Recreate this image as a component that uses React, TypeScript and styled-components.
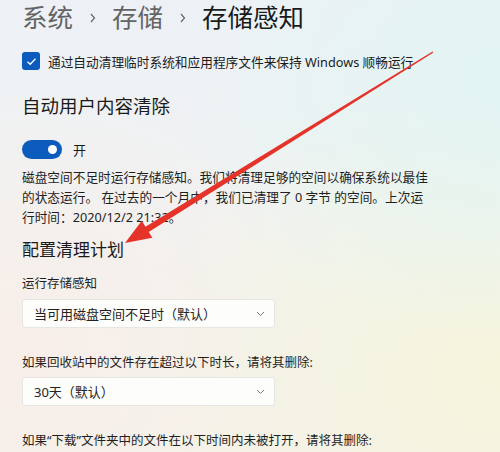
import React from 'react';
import styled, { createGlobalStyle } from 'styled-components';

const GlobalStyle = createGlobalStyle`
  html, body {
    margin: 0;
    padding: 0;
  }
  body {
    font-family: "Noto Sans", "Noto Sans CJK SC", sans-serif;
    color: #1b1b1b;
  }
`;

const Page = styled.main`
  position: relative;
  width: 500px;
  height: 452px;
  overflow: hidden;
  box-sizing: border-box;
  padding-left: 22px;
  background:
    radial-gradient(ellipse 320px 260px at 100% 18%, #e2f5f3 0%, rgba(226, 245, 243, 0) 100%),
    radial-gradient(ellipse 360px 300px at 100% 82%, #f5f4dc 0%, rgba(245, 244, 220, 0) 100%),
    radial-gradient(ellipse 340px 260px at 0% 78%, #f8eee9 0%, rgba(248, 238, 233, 0) 100%),
    linear-gradient(180deg, #edf1f6 0%, #f1f2f0 60%, #f4f2ea 100%);
`;

const Breadcrumb = styled.nav`
  display: flex;
  align-items: center;
  height: 35px;
  font-size: 25.5px;
  line-height: 35px;
`;

const Crumb = styled.span<{ current?: boolean }>`
  color: ${({ current }) => (current ? '#1a1a1a' : '#646464')};
`;

const Sep = styled.svg`
  width: 8px;
  height: 12px;
  margin: 0 15px 0 16px;
`;

const CheckRow = styled.label`
  display: flex;
  align-items: center;
  gap: 8px;
  margin-top: 9px;
  height: 34px;
  font-size: 12.7px;
`;

const CheckBox = styled.span`
  width: 18px;
  height: 18px;
  border-radius: 3px;
  background: #0b5cbd;
  display: flex;
  align-items: center;
  justify-content: center;
`;

const Heading = styled.h2<{ size: number; top: number }>`
  margin: ${({ top }) => top}px 0 0;
  font-size: ${({ size }) => size}px;
  font-weight: 400;
  line-height: 28px;
  color: #1a1a1a;
`;

const ToggleRow = styled.div`
  display: flex;
  align-items: center;
  gap: 11px;
  margin-top: 19px;
  height: 20px;
  font-size: 13px;
`;

const Toggle = styled.span`
  position: relative;
  width: 40px;
  height: 19px;
  border-radius: 10px;
  background: #0b5cbd;
  &::after {
    content: '';
    position: absolute;
    right: 5px;
    top: 5px;
    width: 9px;
    height: 9px;
    border-radius: 50%;
    background: #fff;
  }
`;

const Paragraph = styled.p`
  margin: 8px 0 0;
  width: 412px;
  font-size: 12.7px;
  line-height: 20px;
  color: #1f1f1f;
`;

const Field = styled.div<{ top: number }>`
  margin-top: ${({ top }) => top}px;
`;

const Label = styled.div`
  font-size: 12.5px;
  line-height: 20px;
  color: #1f1f1f;
`;

const Select = styled.div<{ gap: number }>`
  margin-top: ${({ gap }) => gap}px;
  box-sizing: border-box;
  width: 253px;
  height: 29px;
  padding: 0 9px 0 11px;
  display: flex;
  align-items: center;
  justify-content: space-between;
  background: rgba(253, 253, 252, 0.95);
  border: 1px solid #e6e6e3;
  border-radius: 3px;
  font-size: 13px;
  color: #222;
`;

const Arrow = styled.svg`
  position: absolute;
  left: 0;
  top: 0;
  width: 500px;
  height: 452px;
  pointer-events: none;
`;

const Chevron = () => (
  <svg width="9" height="6" viewBox="0 0 9 6">
    <polyline points="1,1 4.5,4.5 8,1" fill="none" stroke="#777" strokeWidth="1" />
  </svg>
);

const App = () => (
  <>
    <GlobalStyle />
    <Page>
      <Breadcrumb>
        <Crumb>系统</Crumb>
        <Sep viewBox="0 0 8 12">
          <polyline points="2,2 5.5,6 2,10" fill="none" stroke="#666" strokeWidth="1.2" />
        </Sep>
        <Crumb>存储</Crumb>
        <Sep viewBox="0 0 8 12">
          <polyline points="2,2 5.5,6 2,10" fill="none" stroke="#666" strokeWidth="1.2" />
        </Sep>
        <Crumb current>存储感知</Crumb>
      </Breadcrumb>

      <CheckRow>
        <CheckBox>
          <svg width="11" height="9" viewBox="0 0 11 9">
            <polyline points="1.5,4.8 4.2,7.3 9.5,1.8" fill="none" stroke="#fff" strokeWidth="1.3" />
          </svg>
        </CheckBox>
        通过自动清理临时系统和应用程序文件来保持 Windows 顺畅运行
      </CheckRow>

      <Heading size={18.5} top={14}>自动用户内容清除</Heading>

      <ToggleRow>
        <Toggle />
        开
      </ToggleRow>

      <Paragraph>
        磁盘空间不足时运行存储感知。我们将清理足够的空间以确保系统以最佳的状态运行。 在过去的一个月中，我们已清理了 0 字节 的空间。上次运行时间：2020/12/2 21:32。
      </Paragraph>

      <Heading size={17} top={9}>配置清理计划</Heading>

      <Field top={10}>
        <Label>运行存储感知</Label>
        <Select gap={5}>
          当可用磁盘空间不足时（默认）
          <Chevron />
        </Select>
      </Field>

      <Field top={25}>
        <Label>如果回收站中的文件存在超过以下时长，请将其删除:</Label>
        <Select gap={4}>
          30天（默认）
          <Chevron />
        </Select>
      </Field>

      <Field top={25}>
        <Label>如果“下载”文件夹中的文件在以下时间内未被打开，请将其删除:</Label>
      </Field>

      <Arrow viewBox="0 0 500 452">
        <polygon
          points="125,243 152.4,237.8 148.7,231.9 433.4,52.6 432.6,51.4 145.5,226.7 141.8,220.8"
          fill="#e5332a"
        />
      </Arrow>
    </Page>
  </>
);

export default App;
